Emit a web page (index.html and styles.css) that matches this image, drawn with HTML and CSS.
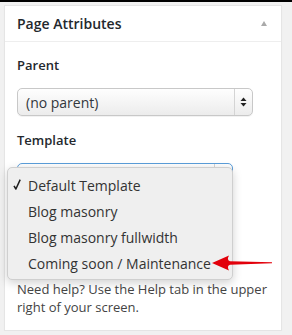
FILE: index.html
```html
<!DOCTYPE html>
<html lang="en">
<head>
    <meta charset="UTF-8">
    <title>Page Attributes</title>
    <link rel="stylesheet" href="styles.css">
</head>
<body>

    <!-- Page Attributes box -->
    <div class="postbox">
        <div class="postbox-header">
            <h2 class="postbox-title">Page Attributes</h2>
            <span class="toggle-indicator"></span>
        </div>

        <div class="inside">
            <p class="field-label">Parent</p>
            <div class="select parent-select">
                <span class="select-value">(no parent)</span>
                <span class="select-arrows">
                    <svg width="7" height="10" viewBox="0 0 7 10">
                        <path d="M3.5 0.5 L6.5 4 L0.5 4 Z" fill="#222"></path>
                        <path d="M3.5 9.5 L6.5 6 L0.5 6 Z" fill="#222"></path>
                    </svg>
                </span>
            </div>

            <p class="field-label">Template</p>
            <div class="template-wrap">
                <div class="select template-select">
                    <span class="select-value"></span>
                    <span class="select-arrows"></span>
                </div>

                <!-- open native menu -->
                <ul class="select-menu">
                    <li class="menu-item">
                        <svg class="check" width="8" height="11" viewBox="0 0 8 11">
                            <path d="M1 6.8 L2.9 10 L7.2 0.6" fill="none" stroke="#1e1e1e" stroke-width="1.5" stroke-linejoin="round"></path>
                        </svg>
                        Default Template
                    </li>
                    <li class="menu-item">Blog masonry</li>
                    <li class="menu-item">Blog masonry fullwidth</li>
                    <li class="menu-item">Coming soon / Maintenance</li>
                </ul>

                <!-- red pointer -->
                <svg class="pointer" width="62" height="20" viewBox="0 0 62 20">
                    <path d="M1 10 L18 2.5 Q15.5 7 19 8.3 L61 9.2 L61 10.2 L19 11.8 Q15.5 13 18 17.5 Z" fill="#e2000b"></path>
                </svg>
            </div>

            <p class="help-text">Need help? Use the Help tab in the upper right of your screen.</p>
        </div>
    </div>

</body>
</html>
```

FILE: styles.css
```css
/* General */
body {
    margin: 0;
    padding: 0;
    background: #f1f1f1;
    border-top: 2px solid #000;
    font-family: "Open Sans", "Liberation Sans", sans-serif;
    color: #444;
    overflow: hidden;
}

/* Box */
.postbox {
    width: 276px;
    margin: 3px 0 0 4px;
    background: #fff;
    border: 1px solid #e5e5e5;
    box-shadow: 0 1px 1px rgba(0, 0, 0, 0.04);
}

.postbox-header {
    height: 35px;
    display: flex;
    align-items: center;
    justify-content: space-between;
    padding: 0 14px 0 12px;
    border-bottom: 1px solid #eee;
}

.postbox-title {
    margin: 0;
    font-size: 14px;
    font-weight: 600;
    color: #23282d;
}

.toggle-indicator {
    width: 0;
    height: 0;
    border-left: 3.5px solid transparent;
    border-right: 3.5px solid transparent;
    border-bottom: 5px solid #aaa;
    margin-top: -1px;
}

.inside {
    padding: 0 12px 14px;
}

/* Labels */
.field-label {
    margin: 14px 0;
    font-size: 13px;
    line-height: 18px;
    font-weight: 600;
    color: #23282d;
}

/* Select boxes */
.select {
    height: 26px;
    display: flex;
    align-items: center;
    border: 1px solid #c8c8c8;
    border-radius: 5px;
    background: linear-gradient(#fefefe, #ececec);
    box-shadow: 0 1px 0 rgba(0, 0, 0, 0.05);
}

.parent-select {
    width: 234px;
    margin-bottom: 15px;
}

.select-value {
    flex: 1;
    padding-left: 8px;
    font-size: 14px;
    color: #32373c;
}

.select-arrows {
    width: 17px;
    height: 100%;
    display: flex;
    align-items: center;
    justify-content: center;
    border-left: 1px solid #d4d4d4;
}

/* Template select, focused and open */
.template-wrap {
    position: relative;
}

.template-select {
    width: 214px;
    border-color: #5b9dd9;
}

.select-menu {
    position: absolute;
    top: 4px;
    left: -10px;
    width: 224px;
    margin: 0;
    padding: 5px 0 2px;
    list-style: none;
    background: #efefef;
    border: 1px solid #cfcfcf;
    border-radius: 5px;
    box-shadow: 0 3px 10px rgba(0, 0, 0, 0.18);
}

.menu-item {
    position: relative;
    height: 26px;
    line-height: 26px;
    padding-left: 20px;
    font-size: 14px;
    color: #333;
}

.check {
    position: absolute;
    left: 5px;
    top: 6px;
}

.pointer {
    position: absolute;
    left: 194px;
    top: 90px;
}

/* Help text */
.help-text {
    margin: 89px 0 0;
    font-size: 13px;
    line-height: 18px;
    color: #444;
}
```
